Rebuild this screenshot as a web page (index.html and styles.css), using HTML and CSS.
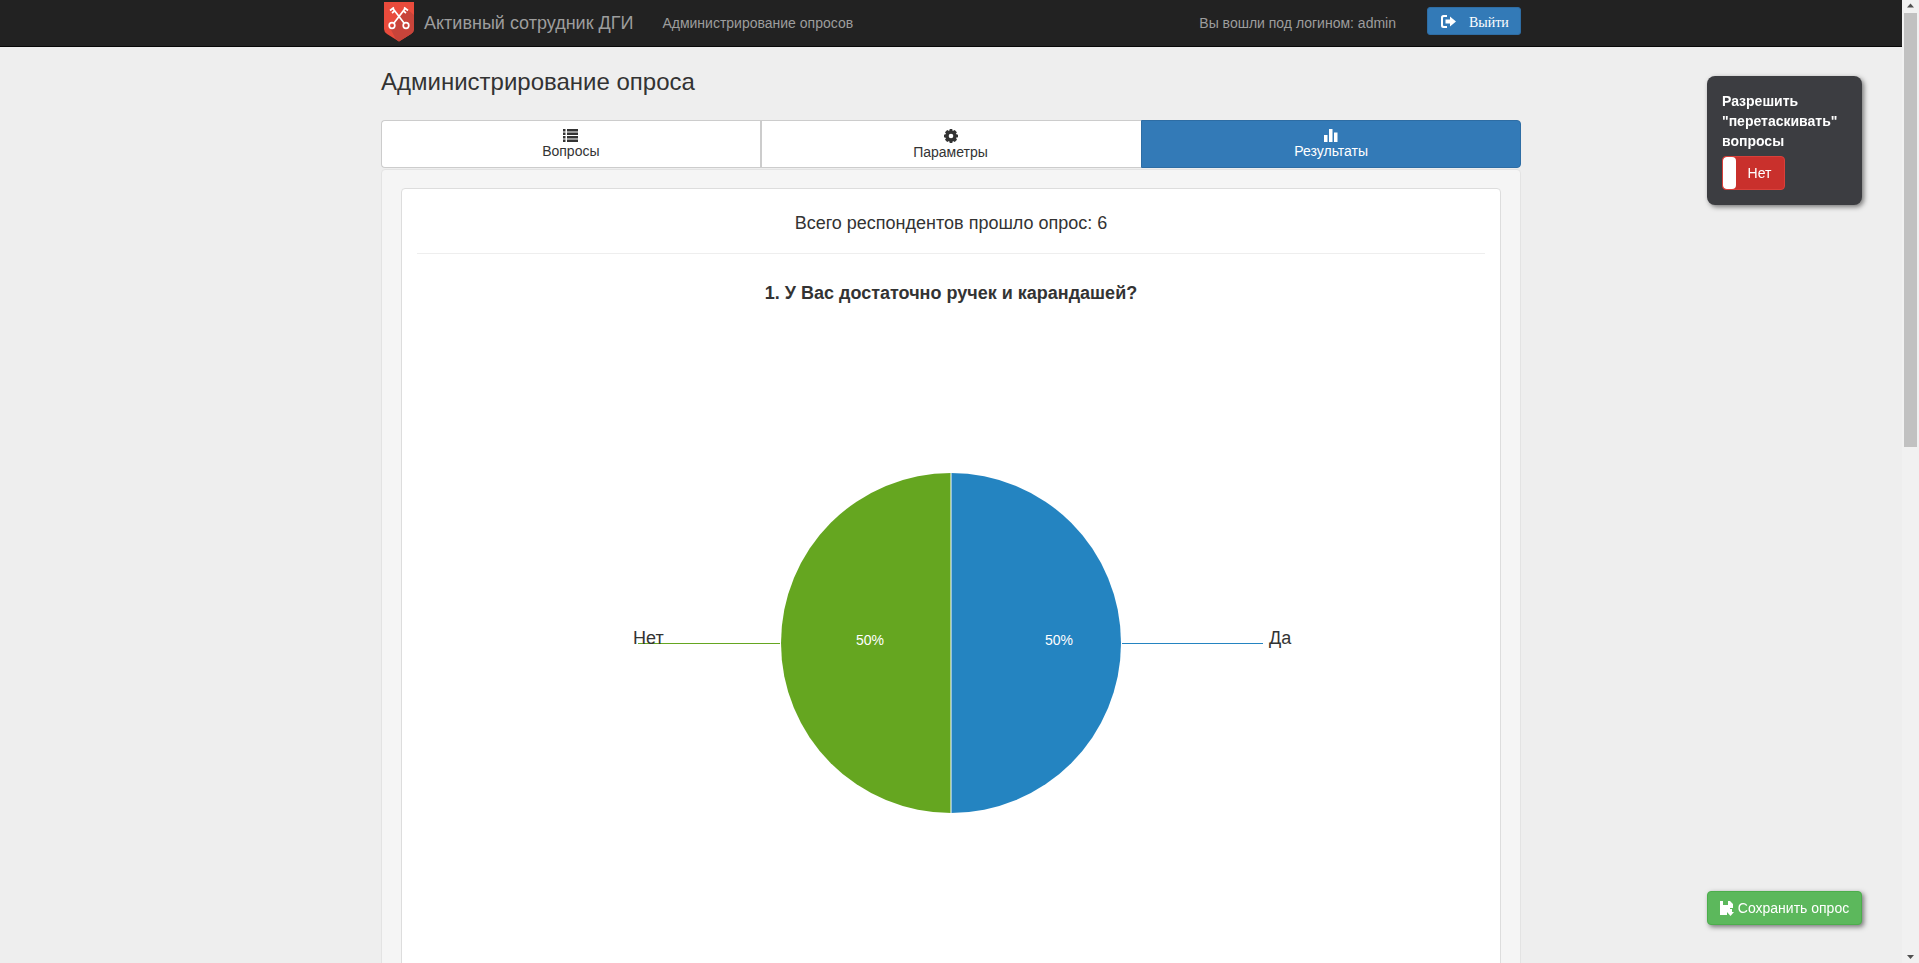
FILE: index.html
```html
<!DOCTYPE html>
<html lang="ru">
<head>
<meta charset="utf-8">
<title>Администрирование опроса</title>
<link rel="stylesheet" href="styles.css">
</head>
<body>
<div class="page">
  <header class="navbar">
    <div class="container nav-inner">
      <svg class="logo" width="30" height="40" viewBox="0 0 30 40">
        <path d="M0 0H30V27Q30 30 27 32L15 39.500L3 32Q0 30 0 27Z" fill="#e94b3c"/>
        <path d="M23 7L30 13V27Q30 30 27 32L15 39.500L12 37.500L6 26Z" fill="#c8443a"/>
        <g fill="none" stroke="#fff" stroke-width="1.700">
          <path d="M8.500 6L20 21M21.500 6L10 21"/>
          <circle cx="8" cy="23.500" r="2.800"/>
          <circle cx="22" cy="23.500" r="2.800"/>
          <path d="M6 8.500L10 5.500M24 8.500L20 5.500M8 11L10.500 9M22 11L19.500 9"/>
        </g>
      </svg>
      <a class="brand">Активный сотрудник ДГИ</a>
      <a class="nav-link">Администрирование опросов</a>
      <span class="login">Вы вошли под логином: admin</span>
      <button class="logout">
        <svg class="logout-icon" width="15" height="13" viewBox="0 0 15 13"><path d="M6 0H2.500A2.500 2.500 0 0 0 0 2.500V10.500A2.500 2.500 0 0 0 2.500 13H6V11H3A1 1 0 0 1 2 10V3A1 1 0 0 1 3 2H6Z" fill="#fff"/><path d="M4.500 4.500H9V1.500L15 6.500L9 11.500V8.500H4.500Z" fill="#fff"/></svg>
        <span>Выйти</span>
      </button>
    </div>
  </header>

  <main class="container">
    <h1 class="title">Администрирование опроса</h1>
    <nav class="tabs">
      <a class="tab">
        <svg class="tab-icon" width="15" height="13" viewBox="0 0 15 13"><path d="M0 0H2.500V2.500H0ZM4 0H15V2.500H4ZM0 3.500H2.500V6H0ZM4 3.500H15V6H4ZM0 7H2.500V9.500H0ZM4 7H15V9.500H4ZM0 10.500H2.500V13H0ZM4 10.500H15V13H4Z" fill="#333"/></svg>
        Вопросы
      </a>
      <a class="tab">
        <svg class="tab-icon" width="14" height="14" viewBox="0 0 14 14"><path d="M5.800 0H8.200L8.700 2.100L10.700 1L12.900 3.200L11.800 5.100L14 5.800V8.200L11.900 8.800L13 10.800L10.800 13L8.900 11.900L8.200 14H5.800L5.100 11.900L3.200 13L1 10.800L2.100 8.900L0 8.200V5.800L2.100 5.100L1 3.200L3.200 1L5.100 2.100Z" fill="#333"/><circle cx="7" cy="7" r="2.300" fill="#fff"/></svg>
        Параметры
      </a>
      <a class="tab tab-active">
        <svg class="tab-icon" width="14" height="13" viewBox="0 0 14 13"><path d="M0 6H3.500V13H0ZM5 0H8.500V13H5ZM10 3.500H13.500V13H10Z" fill="#fff"/></svg>
        Результаты
      </a>
    </nav>

    <section class="well">
      <div class="panel">
        <div class="total">Всего респондентов прошло опрос: 6</div>
        <hr class="rule">
        <h2 class="question">1. У Вас достаточно ручек и карандашей?</h2>
        <svg class="pie" width="1100" height="760" viewBox="0 0 1100 760">
          <path d="M550 226A170 170 0 0 1 550 566Z" fill="#2484c1"/>
          <path d="M550 226A170 170 0 0 0 550 566Z" fill="#65a620"/>
          <path d="M550 226V566" stroke="#fff" stroke-width="1" fill="none"/>
          <path d="M721 396.500H862" stroke="#2484c1" stroke-width="1" fill="none"/>
          <path d="M379 396.500H237" stroke="#65a620" stroke-width="1" fill="none"/>
          <text class="pie-pct" x="658" y="397.500" text-anchor="middle">50%</text>
          <text class="pie-pct" x="469" y="397.500" text-anchor="middle">50%</text>
          <text class="pie-label" x="868" y="397">Да</text>
          <text class="pie-label" x="232" y="397">Нет</text>
        </svg>
      </div>
    </section>
  </main>
</div>

<aside class="drag-box">
  <div class="drag-title">Разрешить "перетаскивать" вопросы</div>
  <div class="switch"><span class="knob"></span><span class="switch-text">Нет</span></div>
</aside>

<button class="save">
  <svg width="14" height="15" viewBox="0 0 14 15"><path d="M0 0H3V4H8V0H10L13 3V7H10V11H7V14H0Z" fill="#fff"/><path d="M9 8H12V11H14L10.500 15L7 11H9Z" fill="#fff"/></svg>
  Сохранить опрос
</button>

<div class="scrollbar">
  <svg class="arrow" width="17" height="13" viewBox="0 0 17 13"><path d="M5 7.500L8.500 3.500L12 7.500Z" fill="#505050"/></svg>
  <div class="thumb"></div>
  <div class="track"></div>
  <svg class="arrow" width="17" height="13" viewBox="0 0 17 13"><path d="M5 5L8.500 9L12 5Z" fill="#505050"/></svg>
</div>
</body>
</html>
```
FILE: styles.css
```css
* { box-sizing: border-box; }
html, body { margin: 0; height: 100%; overflow: hidden; }
body {
  background: #eeeeee;
  font-family: "Liberation Sans", Arial, sans-serif;
  font-size: 14px;
  color: #333;
}
.page { width: 1902px; }
.container { width: 1170px; margin: 0 auto; padding: 0 15px; }
.navbar {
  height: 47px;
  background: #222222;
  border-bottom: 1px solid #080808;
}
.nav-inner { display: flex; align-items: center; height: 46px; }
.logo { margin: 0 0 2px 3px; flex: none; }
.brand { margin-left: 10px; font-size: 18px; color: #9d9d9d; }
.nav-link { margin-left: 29px; color: #9d9d9d; }
.login { margin-left: auto; color: #9d9d9d; }
.logout {
  display: flex; align-items: center;
  margin: 0 0 4px 31px; width: 94px; height: 28px; padding: 0 0 0 13px;
  background: #337ab7; border: 1px solid #2e6da4; border-radius: 3px;
  color: #fff;
  font-family: "Liberation Serif", "Times New Roman", serif; font-size: 14px;
}
.logout-icon { margin-top: 1px; }
.logout span { margin-left: 13px; position: relative; top: 2px; }
.title { margin: 21px 0 25px; font-size: 24px; font-weight: 400; line-height: 27px; }
.tabs { display: flex; height: 48px; }
.tab {
  flex: 1; display: flex; flex-direction: column; align-items: center;
  padding-top: 8px;
  background: #fff; border: 1px solid #ccc; border-right-width: 0; line-height: 16px;
}
.tab:first-child { border-radius: 4px 0 0 4px; }
.tab + .tab { border-left: 2px solid #ccc; padding-right: 2px; }
.tab-active, .tab + .tab-active {
  background: #337ab7; border: 1px solid #2e6da4; border-radius: 0 4px 4px 0; color: #fff; padding-right: 0;
}
.tab-icon { flex: none; margin-bottom: 1px; }
.well {
  margin-top: 1px; padding: 18px 19px 0; height: 900px;
  background: #f5f5f5; border: 1px solid #e3e3e3; border-radius: 4px;
}
.panel {
  height: 860px; padding: 0 15px;
  background: #fff; border: 1px solid #ddd; border-radius: 4px;
}
.total { padding-top: 24px; text-align: center; font-size: 18px; line-height: 20px; }
.rule { margin: 20px 0 0; border: 0; border-top: 1px solid #eee; }
.question { margin: 29px 0 0; text-align: center; font-size: 18px; line-height: 20px; font-weight: 700; }
.pie { display: block; margin: -56px 0 0 -16px; }
.pie-pct { font-size: 14px; fill: #fff; font-family: "Liberation Sans", sans-serif; }
.pie-label { font-size: 18px; fill: #333; font-family: "Liberation Sans", sans-serif; }
.drag-box {
  position: fixed; left: 1707px; top: 76px; width: 155px; height: 129px;
  padding: 15px 15px;
  background: #3c3d41; border-radius: 8px; box-shadow: 2px 2px 5px rgba(0,0,0,.5);
  color: #fff; font-weight: 700; line-height: 20px;
}
.switch {
  display: flex; align-items: center; width: 63px; height: 34px; margin-top: 5px;
  background: #c9302c; border: 1px solid #d9403a; border-radius: 4px; overflow: hidden;
}
.knob { width: 13px; height: 32px; background: #fff; border-radius: 4px; flex: none; }
.switch-text { flex: 1; text-align: center; font-weight: 400; padding-right: 1px; }
.save {
  position: fixed; left: 1707px; top: 891px; width: 155px; height: 34px; padding: 0;
  display: flex; align-items: center; justify-content: center; gap: 4px;
  background: #5cb85c; border: 1px solid #4cae4c; border-radius: 4px;
  box-shadow: 2px 2px 5px rgba(0,0,0,.5);
  color: #fff; font-family: "Liberation Sans", sans-serif; font-size: 14px;
}
.scrollbar {
  position: fixed; right: 0; top: 0; bottom: 0; width: 17px;
  display: flex; flex-direction: column; background: #f1f1f1;
}
.arrow { flex: none; display: block; }
.thumb { height: 434px; margin: 0 2px; background: #c1c1c1; flex: none; }
.track { flex: 1; }
```
